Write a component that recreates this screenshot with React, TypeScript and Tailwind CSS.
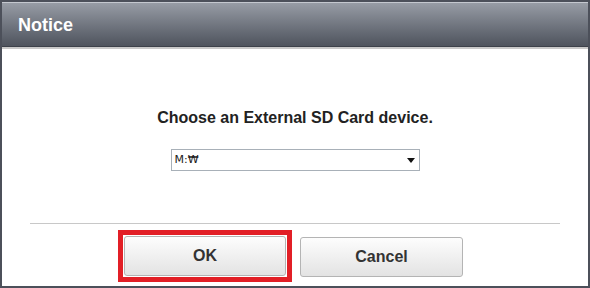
export default function App() {
  return (
    <div className="w-[590px] h-[288px] bg-[#4c505a] p-[2px] pb-[2px] font-['Liberation_Sans',Arial,sans-serif]">
      <div className="flex h-full flex-col bg-white">
        {/* Title bar */}
        <div className="h-[44px] border-t border-[#c4c8cf] bg-gradient-to-b from-[#979ca5] to-[#4f545e] pl-[16px] pt-[9px]">
          <span className="text-[18px] font-bold text-white">Notice</span>
        </div>
        <div className="h-px bg-[#3d414a]" />
        <div className="h-[2px] bg-[#c9c9c9]" />

        {/* Body */}
        <div className="flex flex-1 flex-col items-center pt-[60px]">
          <p className="text-[16px] font-bold leading-[18px] text-[#222]">Choose an External SD Card device.</p>
          <div className="mt-[22px] flex h-[22px] w-[249px] items-center justify-between border border-[#a8b0b8] bg-white pl-[3px] pr-[4px]">
            <span className="font-['DejaVu_Sans',sans-serif] text-[11px] text-[#222]">M:₩</span>
            <svg width="8" height="5" viewBox="0 0 8 5">
              <path d="M0 0h8L4 5z" fill="#111" />
            </svg>
          </div>
          <div className="mt-[52px] h-px w-[530px] bg-[#c8c8c8]" />
          <div className="mt-[6px] flex items-start gap-[8px] pr-[9px]">
            <div className="border-[5px] border-[#e21f26] p-px">
              <button className="flex h-[40px] w-[162px] items-center justify-center rounded-[3px] border border-[#b4b4b4] bg-gradient-to-b from-[#fdfdfd] to-[#e3e3e3] text-[16px] font-bold text-[#333]">
                OK
              </button>
            </div>
            <button className="mt-[7px] flex h-[40px] w-[163px] items-center justify-center rounded-[3px] border border-[#b4b4b4] bg-gradient-to-b from-[#fdfdfd] to-[#e3e3e3] text-[16px] font-bold text-[#333]">
              Cancel
            </button>
          </div>
        </div>
      </div>
    </div>
  );
}
